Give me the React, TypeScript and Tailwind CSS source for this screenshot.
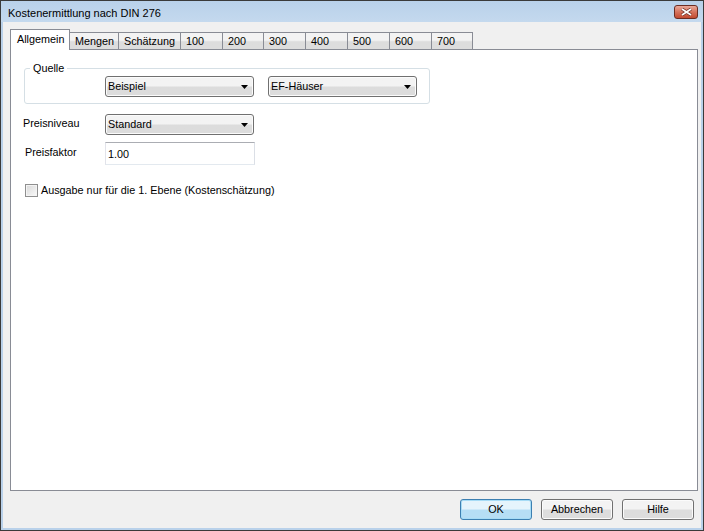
import React from "react";

const tabs = ["Allgemein", "Mengen", "Schätzung", "100", "200", "300", "400", "500", "600", "700"];
const tabWidths = [60, 49, 62, 42, 41, 42, 42, 42, 42, 41];

function Combo({ value }: { value: string }) {
  return (
    <div className="flex h-[21px] w-[149px] items-center justify-between rounded-[3px] border border-[#707070] bg-gradient-to-b from-[#f3f3f3] from-45% to-[#dcdcdc] to-55% pl-[2px] pr-[5px] shadow-[inset_0_0_0_1px_#fbfbfb]">
      <span>{value}</span>
      <svg width="7" height="4" viewBox="0 0 7 4">
        <path d="M0 0h7L3.5 4z" fill="#000" />
      </svg>
    </div>
  );
}

function Button({ label, primary }: { label: string; primary?: boolean }) {
  return (
    <div
      className={
        primary
          ? "flex h-[21px] w-[72px] items-center justify-center rounded-[3px] border border-[#3c7fb1] bg-gradient-to-b from-[#e5f4fc] from-45% to-[#b6def5] to-55% shadow-[inset_0_0_0_1px_#a7dcf6]"
          : "flex h-[21px] w-[72px] items-center justify-center rounded-[3px] border border-[#707070] bg-gradient-to-b from-[#f3f3f3] from-45% to-[#dddddd] to-55% shadow-[inset_0_0_0_1px_#fbfbfb]"
      }
    >
      {label}
    </div>
  );
}

export default function App() {
  return (
    <div
      className="flex h-[531px] w-[704px] flex-col overflow-hidden border border-[#3a3a3a] bg-[#f0f0f0] text-[10.8px] text-[#000]"
      style={{ fontFamily: '"Liberation Sans", Arial, sans-serif' }}
    >
      {/* title bar */}
      <div className="flex h-[21px] shrink-0 items-start justify-between bg-gradient-to-b from-[#b9d1ea] to-[#c4d9ee] pl-[7px] pr-[5px]">
        <span className="pt-[4px] text-[11px]">Kostenermittlung nach DIN 276</span>
        <div className="mt-[4px] flex h-[14px] w-[24px] items-center justify-center rounded-[3px] border border-[#6b2d23] bg-gradient-to-b from-[#e9a99a] via-[#d5725c] to-[#c24a30]">
          <svg width="11" height="8" viewBox="0 0 11 8">
            <path d="M1 1l9 6M10 1L1 7" stroke="#6b2d23" strokeWidth="3.2" />
            <path d="M1 1l9 6M10 1L1 7" stroke="#fff" strokeWidth="1.7" />
          </svg>
        </div>
      </div>

      <div className="flex flex-1 flex-col border-x-[2px] border-b-[2px] border-[#b9d1ea] px-[7px] pt-[7px]">
        {/* tabs */}
        <div className="flex h-[20px] items-end">
          {tabs.map((t, i) =>
            i === 0 ? (
              <div
                key={t}
                className="relative z-10 -mb-[1px] flex h-[21px] items-center border border-b-0 border-[#898c95] bg-white pb-[2px] pl-[6px]"
                style={{ width: tabWidths[i] }}
              >
                {t}
              </div>
            ) : (
              <div
                key={t}
                className="flex h-[17px] items-center border-r border-t border-[#898c95] bg-gradient-to-b from-[#f3f3f3] from-45% to-[#dddddd] to-55% pl-[5px]"
                style={{ width: tabWidths[i] }}
              >
                {t}
              </div>
            )
          )}
        </div>

        {/* panel */}
        <div className="flex h-[442px] w-[688px] flex-col border border-[#898c95] bg-white pl-[13px] pt-[18px]">
          <div className="relative flex h-[36px] w-[406px] rounded-[3px] border border-[#d5dfe5] pl-[80px] pt-[7px]">
            <span className="absolute left-[5px] top-[-7px] bg-white px-[3px] leading-[13px]">Quelle</span>
            <div className="flex gap-[14px]">
              <Combo value="Beispiel" />
              <Combo value="EF-Häuser" />
            </div>
          </div>

          <div className="mt-[10px] flex items-center">
            <span className="-ml-[1px] w-[82px] pb-[2px]">Preisniveau</span>
            <Combo value="Standard" />
          </div>

          <div className="mt-[7px] flex items-center">
            <span className="ml-[1px] w-[80px] pb-[2px]">Preisfaktor</span>
            <div className="flex h-[23px] w-[150px] items-center border border-[#abadb3] border-b-[#e3e9ef] border-l-[#e2e3ea] border-r-[#dbdfe6] pl-[2px] pt-[1px]">
              1.00
            </div>
          </div>

          <div className="mt-[17px] flex items-center gap-[3px] pl-[1px]">
            <div className="h-[13px] w-[13px] border border-[#8f8f8f] bg-gradient-to-br from-[#d8d8d8] to-[#fafafa] shadow-[inset_0_0_0_1px_#f4f4f4]" />
            <span>Ausgabe nur für die 1. Ebene (Kostenschätzung)</span>
          </div>
        </div>

        {/* buttons */}
        <div className="flex justify-end gap-[9px] pt-[8px]">
          <Button label="OK" primary />
          <Button label="Abbrechen" />
          <Button label="Hilfe" />
        </div>
      </div>
    </div>
  );
}
